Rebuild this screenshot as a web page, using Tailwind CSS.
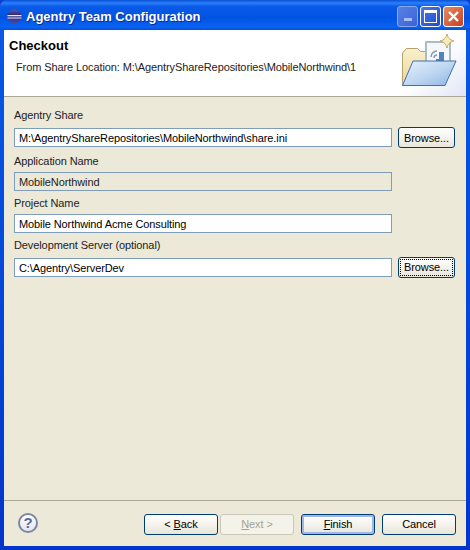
<!DOCTYPE html>
<html>
  <head>
    <meta charset="UTF-8" />
    <title>Agentry Team Configuration</title>
    <script src="https://cdn.jsdelivr.net/npm/@tailwindcss/browser@4"></script>
  </head>
  <body class="bg-[#0a3fd0]">
    <div class="w-[470px] h-[550px] flex flex-col overflow-hidden rounded-t-[7px] font-['Liberation_Sans',sans-serif] text-[11px] tracking-[-0.1px] leading-[14px] text-black bg-gradient-to-b from-[#0a5ae8] to-[#0335cc]">
      <!-- title bar -->
      <div class="h-[30px] shrink-0 flex items-center pl-[7px] pr-[6px] pt-[2px] bg-[linear-gradient(to_bottom,#0a4fd8_0,#2a80f8_10%,#0a5ae8_22%,#0053e2_60%,#0a62f2_90%,#0450d8_100%)]">
        <svg width="15" height="15" viewBox="0 0 15 15" class="shrink-0">
          <defs>
            <linearGradient id="sphere" x1="0" y1="0" x2="0" y2="1">
              <stop offset="0" stop-color="#5a58a8" />
              <stop offset="0.4" stop-color="#2c2a78" />
              <stop offset="1" stop-color="#4b49a0" />
            </linearGradient>
          </defs>
          <circle cx="7.500" cy="7.500" r="7" fill="url(#sphere)" />
          <path d="M0.500 6h14v1.200H0.500zM0.500 8.400h14v1.100H0.500z" fill="#e8e6f6" />
        </svg>
        <span class="ml-[4px] mt-[2px] text-white font-bold text-[13px] tracking-normal [text-shadow:1px_1px_0_#0a2a90]">Agentry Team Configuration</span>
        <div class="ml-auto flex gap-[2px]">
          <div class="w-[21px] h-[21px] rounded-[3px] border border-[#8aa8ec] bg-gradient-to-br from-[#5a80e4] to-[#3a62d8] flex items-end justify-center pb-[5px]">
            <div class="w-[8px] h-[3px] bg-[#a9bdf0]"></div>
          </div>
          <div class="w-[21px] h-[21px] rounded-[3px] border border-white bg-gradient-to-br from-[#4a78e8] to-[#2048d0] flex items-center justify-center">
            <div class="w-[13px] h-[13px] border border-white border-t-[3px]"></div>
          </div>
          <div class="w-[21px] h-[21px] rounded-[3px] border border-white bg-gradient-to-br from-[#e88a60] to-[#c63f1c] flex items-center justify-center">
            <svg width="13" height="13" viewBox="0 0 13 13"><path d="M2 2l9 9M11 2l-9 9" stroke="#fff" stroke-width="2.4" /></svg>
          </div>
        </div>
      </div>

      <!-- window body -->
      <div class="flex-1 mx-[4px] mb-[4px] flex flex-col bg-[#ece9d8] min-h-0">
        <div class="h-[66px] shrink-0 bg-white border-b border-[#aca899] flex relative box-content">
          <div class="pl-[5px] pt-[8px]">
            <div class="font-bold text-[13px] tracking-normal leading-[15px]">Checkout</div>
            <div class="mt-[7px] pl-[7px] text-[#222]">From Share Location: M:\AgentryShareRepositories\MobileNorthwind\1</div>
          </div>
          <div class="absolute right-0 top-0 h-[66px] w-[70px] bg-gradient-to-br from-white via-white to-[#e2e6f6]">
            <svg width="70" height="66" viewBox="0 0 70 66">
              <defs>
                <linearGradient id="front" x1="0" y1="0" x2="1" y2="1">
                  <stop offset="0" stop-color="#e4f0fb" />
                  <stop offset="0.5" stop-color="#c0d8f2" />
                  <stop offset="1" stop-color="#8fb4e2" />
                </linearGradient>
                <linearGradient id="back" x1="0" y1="0" x2="0" y2="1">
                  <stop offset="0" stop-color="#fbf0cd" />
                  <stop offset="1" stop-color="#eed596" />
                </linearGradient>
              </defs>
              <path d="M6.500 55.500V23l4-4.500h11l3 3h16v34z" fill="url(#back)" stroke="#b5a26f" />
              <rect x="30" y="12" width="24" height="24" fill="#f5f8fb" stroke="#a9bdc6" stroke-width="2" />
              <path d="M35 27a6 6 0 0 1 6-6M38 28a3 3 0 0 1 3-3" stroke="#8a97a8" fill="none" stroke-width="1.500" />
              <path d="M40 29h3v-7h5v11H40z" fill="#4f84bd" />
              <path d="M17 31h43L49 55.500H6.500z" fill="url(#front)" stroke="#3f6fae" />
              <path d="M51 4c.8 3.500 2.500 6 7 7-4.500 1-6.200 3.500-7 7-.8-3.500-2.500-6-7-7 4.500-1 6.200-3.500 7-7z" fill="#f8ecbc" stroke="#c9a44f" />
            </svg>
          </div>
        </div>

        <div class="flex-1 min-h-0 pl-[10px] pr-[10px] pt-[11px]">
          <label class="block h-[14px] text-[#222]">Agentry Share</label>
          <div class="flex items-center gap-[6px] h-[21px] mt-[5px]">
            <div class="w-[378px] h-[19px] px-[4px] bg-white border border-[#7f9db9] leading-[18px] whitespace-nowrap overflow-hidden">M:\AgentryShareRepositories\MobileNorthwind\share.ini</div>
            <button class="w-[57px] h-[21px] rounded-[3px] border border-[#003c74] bg-gradient-to-b from-white to-[#e8e6da] leading-[18px]">Browse...</button>
          </div>
          <label class="block h-[14px] mt-[6px] text-[#222]">Application Name</label>
          <div class="w-[378px] h-[19px] mt-[4px] px-[4px] border border-[#7f9db9] leading-[18px] text-[#222]">MobileNorthwind</div>
          <label class="block h-[14px] mt-[5px] text-[#222]">Project Name</label>
          <div class="w-[378px] h-[19px] mt-[4px] px-[4px] bg-white border border-[#7f9db9] leading-[18px]">Mobile Northwind Acme Consulting</div>
          <label class="block h-[14px] mt-[5px] text-[#222]">Development Server (optional)</label>
          <div class="flex items-center gap-[6px] h-[21px] mt-[5px]">
            <div class="w-[378px] h-[19px] px-[4px] bg-white border border-[#7f9db9] leading-[18px]">C:\Agentry\ServerDev</div>
            <button class="w-[57px] h-[21px] rounded-[3px] border border-[#003c74] bg-gradient-to-b from-white to-[#e8e6da] p-[1px]">
              <span class="block h-full leading-[17px] outline-1 outline-dotted outline-black -outline-offset-1">Browse...</span>
            </button>
          </div>
        </div>

        <!-- footer -->
        <div class="h-[46px] shrink-0 border-t border-[#aca899] flex items-start pl-[14px] pr-[10px] pt-[13px] box-border">
          <div class="w-[20px] h-[20px] -mt-px rounded-full border-2 border-[#7a88a8] bg-gradient-to-b from-white to-[#e4e7f0] flex items-center justify-center text-[#5d6a92] font-bold text-[15px]">?</div>
          <div class="ml-auto flex">
            <button class="w-[74px] h-[21px] pb-[2px] rounded-[3px] border border-[#003c74] bg-gradient-to-b from-white to-[#e8e6da]">&lt; <span class="underline">B</span>ack</button>
            <button class="w-[74px] h-[21px] pb-[2px] ml-[2px] rounded-[3px] border border-[#c9c7ba] bg-[#f4f3ea] text-[#a5a294]"><span class="underline">N</span>ext &gt;</button>
            <button class="w-[74px] h-[21px] pb-[2px] ml-[7px] rounded-[3px] border border-[#003c74] bg-gradient-to-b from-white to-[#e8e6da] shadow-[inset_0_0_0_2px_#9db8e8]"><span class="underline">F</span>inish</button>
            <button class="w-[74px] h-[21px] pb-[2px] ml-[7px] rounded-[3px] border border-[#003c74] bg-gradient-to-b from-white to-[#e8e6da]">Cancel</button>
          </div>
        </div>
      </div>
    </div>
  </body>
</html>
